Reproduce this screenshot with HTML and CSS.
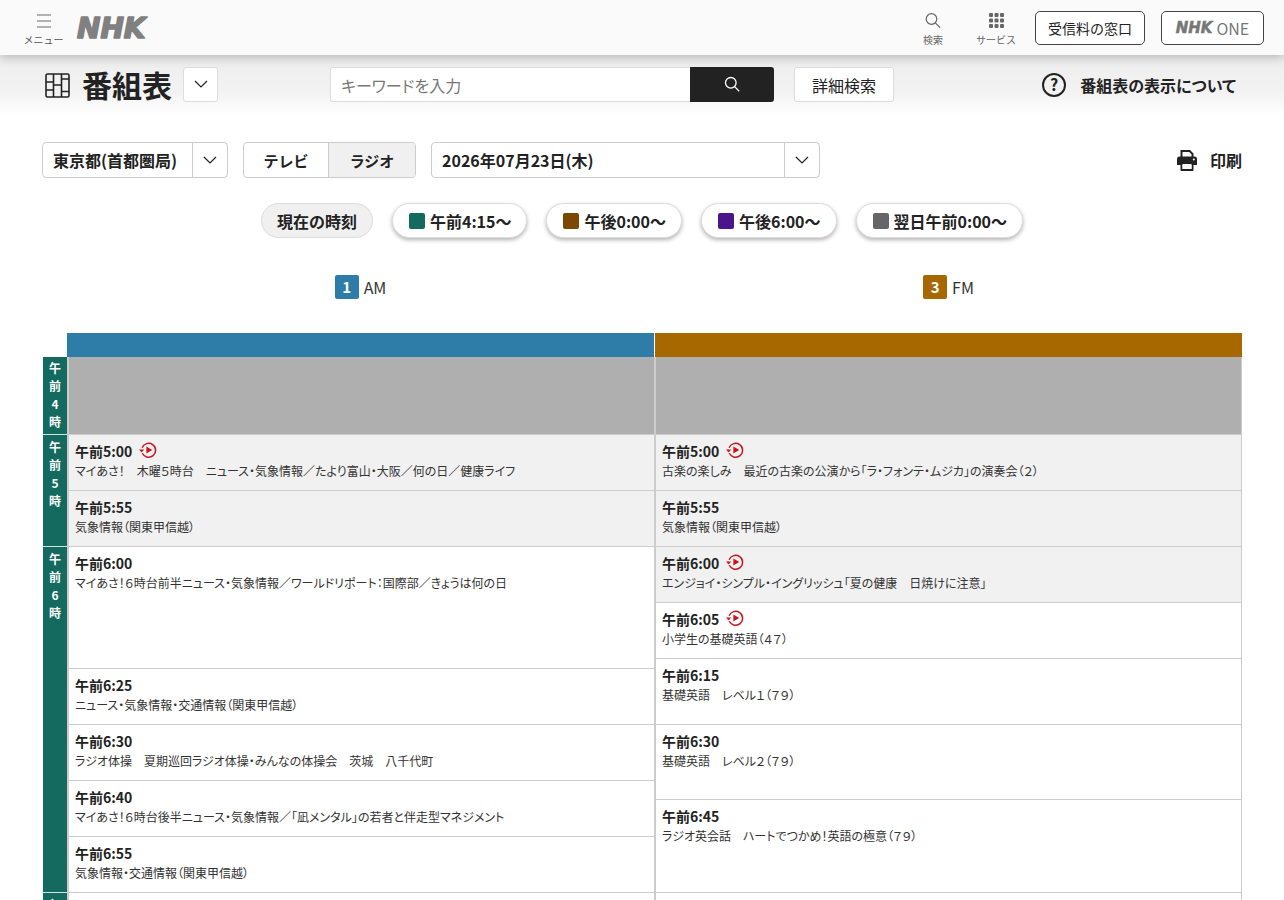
FILE: index.html
```html
<!DOCTYPE html>
<html lang="ja">
<head>
    <meta charset="UTF-8">
    <meta name="viewport" content="width=device-width, initial-scale=1.0">
    <title>番組表</title>
    <link rel="stylesheet" href="styles.css">
</head>
<body>
<svg class="defs">
    <symbol id="replay" viewBox="0 0 18 18">
        <path d="M3.100 6.800A7 7 0 1 1 3.300 12.300" fill="none" stroke="#c9151e" stroke-width="1.500"/>
        <path d="M0 8.400h5.200l-2.600 3z" fill="#c9151e"/>
        <path d="M7.400 5.500l5.800 3.500-5.800 3.500z" fill="#c9151e"/>
    </symbol>
    <symbol id="chevron" viewBox="0 0 14 8">
        <path d="M1 1l6 6 6-6" fill="none" stroke="#222" stroke-width="1.200"/>
    </symbol>
</svg>
<div class="page">
    <header class="site-header">
        <a class="menu-btn">
            <svg width="14" height="14" viewBox="0 0 14 14"><path d="M0 1h14M0 7h14M0 13h14" stroke="#666" stroke-width="1.200"/></svg>
            <span>メニュー</span>
        </a>
        <svg class="nhk-logo" width="80" height="40" viewBox="0 0 80 40"><text x="1" y="30">NHK</text></svg>
        <div class="header-right">
            <a class="head-icon search-icon">
                <svg width="16" height="15" viewBox="0 0 16 15"><circle cx="6.500" cy="6" r="5.300" fill="none" stroke="#666" stroke-width="1.200"/><path d="M10.300 9.800l4.900 4.900" stroke="#666" stroke-width="1.200"/></svg>
                <span>検索</span>
            </a>
            <a class="head-icon service-icon">
                <svg width="15" height="15" viewBox="0 0 15 15" fill="#666"><rect x="0" y="0" width="4" height="4" rx="1"/><rect x="5.500" y="0" width="4" height="4" rx="1"/><rect x="11" y="0" width="4" height="4" rx="1"/><rect x="0" y="5.500" width="4" height="4" rx="1"/><rect x="5.500" y="5.500" width="4" height="4" rx="1"/><rect x="11" y="5.500" width="4" height="4" rx="1"/><rect x="0" y="11" width="4" height="4" rx="1"/><rect x="5.500" y="11" width="4" height="4" rx="1"/><rect x="11" y="11" width="4" height="4" rx="1"/></svg>
                <span>サービス</span>
            </a>
            <a class="head-btn fee-btn">受信料の窓口</a>
            <a class="head-btn one-btn"><span class="nhk-small">NHK</span><span class="one-text">ONE</span></a>
        </div>
    </header>

    <section class="title-band">
        <svg class="title-icon" width="25" height="25" viewBox="0 0 25 25" fill="none" stroke="#222" stroke-width="1.600"><rect x="1" y="1" width="23" height="23" rx="1.500"/><path d="M8.500 1v23M16.500 1v23M1 9h7.500M1 17h7.500M8.500 12h8M16.500 6h7.500M16.500 18.500h7.500"/></svg>
        <h1>番組表</h1>
        <button class="square-select"><svg width="14" height="8"><use href="#chevron"/></svg></button>
        <div class="search-box">
            <span class="search-input">キーワードを入力</span>
            <span class="search-go"><svg width="16" height="16" viewBox="0 0 16 16"><circle cx="6.800" cy="6.800" r="5.300" fill="none" stroke="#fff" stroke-width="1.300"/><path d="M10.600 10.600l4.600 4.600" stroke="#fff" stroke-width="1.300"/></svg></span>
        </div>
        <a class="detail-btn">詳細検索</a>
        <a class="about-link">
            <svg width="24" height="24" viewBox="0 0 24 24"><circle cx="12" cy="12" r="11" fill="none" stroke="#222" stroke-width="2"/><text x="12" y="17.500" text-anchor="middle" class="about-q">?</text></svg>
            <span>番組表の表示について</span>
        </a>
    </section>

    <section class="filters">
        <div class="select-box region-select">
            <span class="select-label">東京都(首都圏局)</span>
            <span class="select-arrow"><svg width="14" height="8"><use href="#chevron"/></svg></span>
        </div>
        <div class="tabs">
            <a class="tab tab-tv">テレビ</a>
            <a class="tab tab-radio">ラジオ</a>
        </div>
        <div class="select-box date-select">
            <span class="select-label">2026年07月23日(木)</span>
            <span class="select-arrow"><svg width="14" height="8"><use href="#chevron"/></svg></span>
        </div>
        <a class="print-link">
            <svg width="22" height="22" viewBox="0 0 22 22" fill="#222"><path d="M4.500 1h9.500l3.500 3.500V9h-13zM6.500 3v5h9V5.300L13.200 3z" fill-rule="evenodd"/><path d="M3.500 7.500h15a2.500 2.500 0 0 1 2.500 2.500v6h-20v-6a2.500 2.500 0 0 1 2.500-2.500z"/><path d="M4.500 13h13v8a1 1 0 0 1-1 1h-11a1 1 0 0 1-1-1zM6.500 15v5h9v-5z" fill-rule="evenodd"/><path d="M6.500 15h9v5h-9z" fill="#fff"/><circle cx="17.800" cy="10.500" r="1" fill="#fff"/></svg>
            <span>印刷</span>
        </a>
    </section>

    <nav class="time-nav">
        <a class="pill pill-now">現在の時刻</a>
        <a class="pill"><i class="swatch swatch-morning"></i>午前4:15〜</a>
        <a class="pill"><i class="swatch swatch-noon"></i>午後0:00〜</a>
        <a class="pill"><i class="swatch swatch-evening"></i>午後6:00〜</a>
        <a class="pill"><i class="swatch swatch-night"></i>翌日午前0:00〜</a>
    </nav>

    <div class="channels">
        <div class="channel"><b class="ch-num ch-am">1</b>AM</div>
        <div class="channel"><b class="ch-num ch-fm">3</b>FM</div>
    </div>

    <div class="timetable">
        <div class="hours">
            <div class="hour h-77">午前4時</div>
            <div class="hour h-112">午前5時</div>
            <div class="hour h-346">午前6時</div>
            <div class="hour h-next">午前7時</div>
        </div>
        <div class="col">
            <div class="col-head head-am"></div>
            <div class="prog h-77 closed"></div>
            <div class="prog h-56 past">
                <p class="time">午前5:00<svg class="replay" width="18" height="18"><use href="#replay"/></svg></p>
                <p class="desc">マイあさ！　木曜５時台　ニュース・気象情報／たより富山・大阪／何の日／健康ライフ</p>
            </div>
            <div class="prog h-56 past">
                <p class="time">午前5:55</p>
                <p class="desc">気象情報（関東甲信越）</p>
            </div>
            <div class="prog h-122">
                <p class="time">午前6:00</p>
                <p class="desc">マイあさ！６時台前半ニュース・気象情報／ワールドリポート：国際部／きょうは何の日</p>
            </div>
            <div class="prog h-56">
                <p class="time">午前6:25</p>
                <p class="desc">ニュース・気象情報・交通情報（関東甲信越）</p>
            </div>
            <div class="prog h-56">
                <p class="time">午前6:30</p>
                <p class="desc">ラジオ体操　夏期巡回ラジオ体操・みんなの体操会　茨城　八千代町</p>
            </div>
            <div class="prog h-56">
                <p class="time">午前6:40</p>
                <p class="desc">マイあさ！６時台後半ニュース・気象情報／「凪メンタル」の若者と伴走型マネジメント</p>
            </div>
            <div class="prog h-56">
                <p class="time">午前6:55</p>
                <p class="desc">気象情報・交通情報（関東甲信越）</p>
            </div>
            <div class="prog h-next"></div>
        </div>
        <div class="col col-right">
            <div class="col-head head-fm"></div>
            <div class="prog h-77 closed"></div>
            <div class="prog h-56 past">
                <p class="time">午前5:00<svg class="replay" width="18" height="18"><use href="#replay"/></svg></p>
                <p class="desc">古楽の楽しみ　最近の古楽の公演から「ラ・フォンテ・ムジカ」の演奏会（２）</p>
            </div>
            <div class="prog h-56 past">
                <p class="time">午前5:55</p>
                <p class="desc">気象情報（関東甲信越）</p>
            </div>
            <div class="prog h-56 past">
                <p class="time">午前6:00<svg class="replay" width="18" height="18"><use href="#replay"/></svg></p>
                <p class="desc">エンジョイ・シンプル・イングリッシュ「夏の健康　日焼けに注意」</p>
            </div>
            <div class="prog h-56">
                <p class="time">午前6:05<svg class="replay" width="18" height="18"><use href="#replay"/></svg></p>
                <p class="desc">小学生の基礎英語（４７）</p>
            </div>
            <div class="prog h-66">
                <p class="time">午前6:15</p>
                <p class="desc">基礎英語　レベル１（７９）</p>
            </div>
            <div class="prog h-75">
                <p class="time">午前6:30</p>
                <p class="desc">基礎英語　レベル２（７９）</p>
            </div>
            <div class="prog h-93">
                <p class="time">午前6:45</p>
                <p class="desc">ラジオ英会話　ハートでつかめ！英語の極意（７９）</p>
            </div>
            <div class="prog h-next"></div>
        </div>
    </div>
</div>
</body>
</html>
```

FILE: styles.css
```css
:root {
    --text-color: #222;
    --border-color: #ccc;
    --teal: #146a5f;
    --am-color: #2e7ca8;
    --fm-color: #a86800;
}

* {
    margin: 0;
    padding: 0;
    box-sizing: border-box;
}

html, body {
    height: 900px;
    overflow: hidden;
}

body {
    background-color: #fff;
    color: var(--text-color);
    font-family: "Noto Sans CJK JP", "Noto Sans", sans-serif;
    font-size: 16px;
}

.defs {
    display: none;
}

.page {
    height: 900px;
    overflow: hidden;
}

/* header */
.site-header {
    position: relative;
    z-index: 2;
    display: flex;
    align-items: center;
    height: 55px;
    padding: 0 20px 0 24px;
    background-color: #fafafa;
    box-shadow: 0 2px 10px rgba(0, 0, 0, 0.25);
}

.menu-btn {
    display: flex;
    flex-direction: column;
    align-items: center;
    width: 39px;
    padding-top: 5px;
    color: #555;
    font-size: 10px;
    line-height: 14px;
    white-space: nowrap;
}

.menu-btn svg {
    margin-bottom: 5px;
}

.nhk-logo {
    margin-left: 13px;
}

.nhk-logo text {
    fill: #808080;
    stroke: #808080;
    stroke-width: 1.600;
    stroke-linejoin: round;
    font-family: "DejaVu Sans", sans-serif;
    font-size: 28px;
    font-style: italic;
    font-weight: 700;
}

.header-right {
    display: flex;
    align-items: center;
    margin-left: auto;
}

.head-icon {
    display: flex;
    flex-direction: column;
    align-items: center;
    padding-top: 5px;
    color: #666;
    font-size: 10px;
    line-height: 14px;
}

.head-icon svg {
    margin-bottom: 5px;
}

.search-icon {
    width: 20px;
    margin-right: 33px;
}

.service-icon {
    width: 40px;
    margin-right: 19px;
}

.head-btn {
    display: flex;
    align-items: center;
    justify-content: center;
    height: 34px;
    background-color: #fff;
    border: 1px solid #444;
    border-radius: 5px;
    font-size: 14px;
}

.fee-btn {
    width: 110px;
    margin-right: 16px;
}

.one-btn {
    width: 103px;
    color: #777;
    gap: 4px;
}

.nhk-small {
    font-family: "DejaVu Sans", sans-serif;
    font-size: 15px;
    font-style: italic;
    font-weight: 700;
    -webkit-text-stroke: 0.500px #777;
}

.one-text {
    font-size: 16px;
}

/* title band */
.title-band {
    display: flex;
    align-items: center;
    height: 60px;
    padding: 0 48px 2px 45px;
    background: linear-gradient(#eee, #f2f2f2 60%, #fff);
}

.title-icon {
    margin-top: 3px;
}

.title-band h1 {
    margin: 0 11px 0 12px;
    font-size: 30px;
    font-weight: 700;
    line-height: 36px;
}

.square-select {
    display: flex;
    align-items: center;
    justify-content: center;
    width: 35px;
    height: 35px;
    background-color: #fff;
    border: 1px solid #ddd;
    border-radius: 3px;
}

.search-box {
    display: flex;
    height: 35px;
    margin-left: 112px;
}

.search-input {
    width: 360px;
    padding: 0 10px;
    background-color: #fff;
    border: 1px solid #ddd;
    border-right: none;
    border-radius: 3px 0 0 3px;
    color: #777;
    font-feature-settings: "palt";
    font-size: 16px;
    line-height: 34px;
}

.search-go {
    display: flex;
    align-items: center;
    justify-content: center;
    width: 84px;
    background-color: #222;
    border-radius: 0 3px 3px 0;
}

.detail-btn {
    width: 100px;
    height: 35px;
    margin-left: 20px;
    background-color: #fff;
    border: 1px solid #ddd;
    border-radius: 3px;
    font-size: 16px;
    line-height: 35px;
    text-align: center;
}

.about-link {
    display: flex;
    align-items: center;
    gap: 14px;
    margin-top: 1px;
    margin-left: auto;
    font-feature-settings: "palt";
    font-size: 16px;
    font-weight: 700;
}

.about-q {
    fill: #222;
    font-size: 16px;
    font-weight: 700;
}

/* filters */
.filters {
    display: flex;
    align-items: center;
    height: 36px;
    margin-top: 27px;
    padding: 0 42px;
}

.select-box {
    display: flex;
    height: 36px;
    background-color: #fff;
    border: 1px solid #ccc;
    border-radius: 4px;
}

.select-label {
    flex: 1;
    padding-left: 10px;
    font-size: 16px;
    font-weight: 700;
    line-height: 35px;
}

.select-arrow {
    display: flex;
    align-items: center;
    justify-content: center;
    width: 35px;
    border-left: 1px solid #ccc;
}

.region-select {
    width: 186px;
}

.tabs {
    display: flex;
    width: 173px;
    height: 36px;
    margin-left: 15px;
    border: 1px solid #ccc;
    border-radius: 4px;
    overflow: hidden;
}

.tab {
    font-size: 15px;
    font-weight: 700;
    line-height: 35px;
    text-align: center;
}

.tab-tv {
    width: 85px;
    border-right: 1px solid #ccc;
}

.tab-radio {
    flex: 1;
    background-color: #f0f0f0;
}

.date-select {
    width: 389px;
    margin-left: 15px;
}

.print-link {
    display: flex;
    align-items: center;
    gap: 12px;
    margin-left: auto;
    font-size: 16px;
    font-weight: 700;
}

/* time jump */
.time-nav {
    display: flex;
    justify-content: center;
    gap: 19px;
    margin-top: 25px;
}

.pill {
    display: flex;
    align-items: center;
    height: 35px;
    padding: 0 15px 0 16px;
    background-color: #fff;
    border: 1px solid #ddd;
    border-radius: 18px;
    box-shadow: 0 2px 4px rgba(0, 0, 0, 0.3);
    font-size: 16px;
    font-weight: 700;
}

.pill-now {
    padding: 0 15px;
    background-color: #f0f0f0;
    box-shadow: none;
}

.swatch {
    width: 16px;
    height: 16px;
    margin-right: 5px;
    border-radius: 2px;
}

.swatch-morning {
    background-color: var(--teal);
}

.swatch-noon {
    background-color: #7c4700;
}

.swatch-evening {
    background-color: #4b168c;
}

.swatch-night {
    background-color: #666;
}

/* channel names */
.channels {
    display: flex;
    gap: 1px;
    margin-top: 37px;
    padding: 0 42px 0 67px;
}

.channel {
    display: flex;
    flex: 1;
    align-items: center;
    justify-content: center;
    height: 24px;
    gap: 5px;
    color: #333;
    font-size: 16px;
}

.ch-num {
    width: 24px;
    height: 24px;
    border-radius: 2px;
    color: #fff;
    font-size: 15px;
    line-height: 24px;
    text-align: center;
}

.ch-am {
    background-color: var(--am-color);
}

.ch-fm {
    background-color: var(--fm-color);
}

/* timetable */
.timetable {
    display: flex;
    margin-top: 34px;
    padding: 0 42px 0 43px;
}

.hours {
    flex: none;
    width: 24px;
    padding-top: 24px;
}

.hour {
    padding: 3px 5px 0;
    background-color: var(--teal);
    border-top: 1px solid #cfe3df;
    color: #fff;
    font-size: 12px;
    font-weight: 700;
    line-height: 18px;
    text-align: center;
    word-break: break-all;
}

.hour:first-child {
    padding-top: 2px;
    border-top: none;
}

.col {
    flex: 1;
    min-width: 0;
}

.col-right {
    margin-left: 1px;
}

.col-head {
    height: 24px;
}

.head-am {
    background-color: var(--am-color);
}

.head-fm {
    background-color: var(--fm-color);
}

.prog {
    padding: 6px 6px 0;
    border-top: 1px solid var(--border-color);
    border-left: 2px solid var(--border-color);
}

.col-right .prog {
    margin-left: -1px;
    border-right: 1px solid var(--border-color);
}

.past {
    background-color: #f1f1f1;
}

.closed {
    background-color: #afafaf;
    border-top: none;
}

.h-56 { height: 56px; }
.h-66 { height: 66px; }
.h-75 { height: 75px; }
.h-77 { height: 77px; }
.h-93 { height: 93px; }
.h-112 { height: 112px; }
.h-122 { height: 122px; }
.h-346 { height: 346px; }
.h-next { height: 200px; }

.time {
    display: flex;
    align-items: center;
    font-size: 14px;
    font-weight: 700;
    line-height: 20px;
}

.replay {
    margin: -2px 0 0 7px;
}

.desc {
    color: #333;
    font-feature-settings: "palt";
    font-size: 12px;
    line-height: 20px;
}
```
